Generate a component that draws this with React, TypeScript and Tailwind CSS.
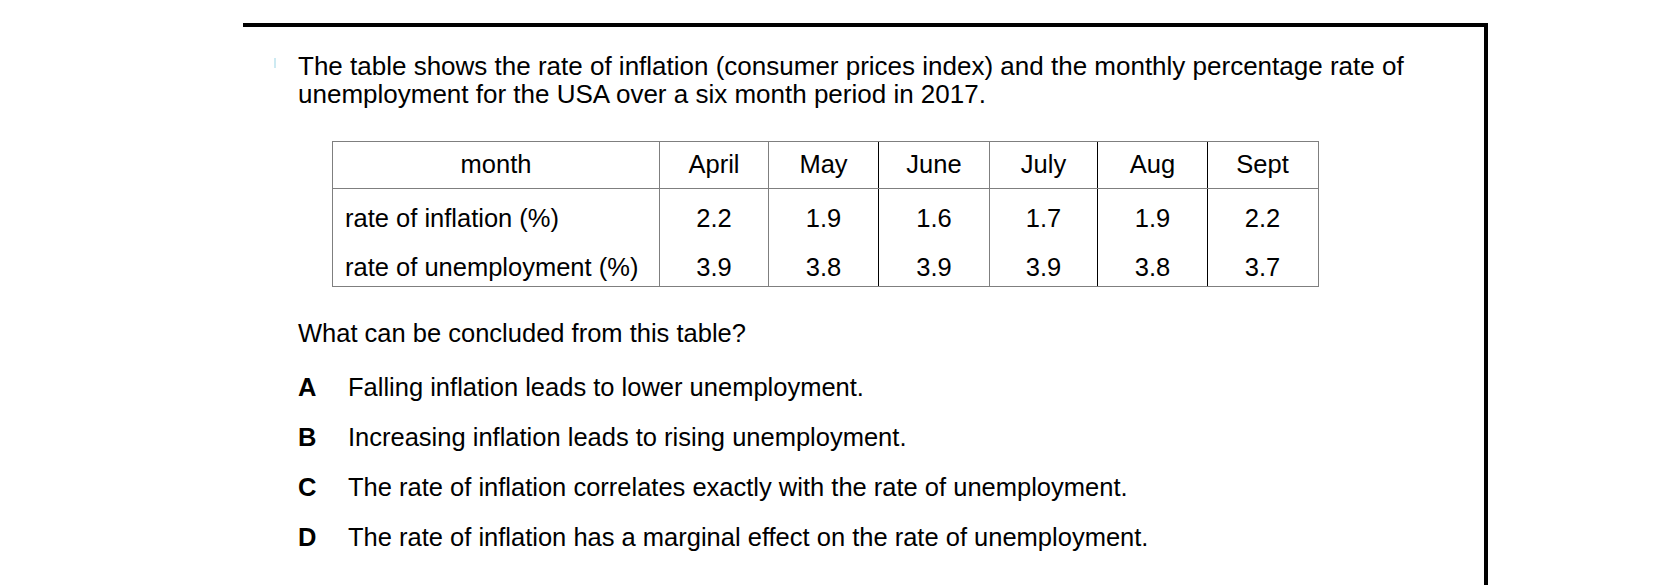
import React from "react";

const font = { fontFamily: '"Liberation Sans", Arial, sans-serif' };

const months = ["April", "May", "June", "July", "Aug", "Sept"];
const inflation = ["2.2", "1.9", "1.6", "1.7", "1.9", "2.2"];
const unemployment = ["3.9", "3.8", "3.9", "3.9", "3.8", "3.7"];
const lineColors = [
  "border-[#7f7f7f]",
  "border-[#7f7f7f]",
  "border-black",
  "border-[#7f7f7f]",
  "border-black",
  "border-black",
];

const options = [
  ["A", "Falling inflation leads to lower unemployment."],
  ["B", "Increasing inflation leads to rising unemployment."],
  ["C", "The rate of inflation correlates exactly with the rate of unemployment."],
  ["D", "The rate of inflation has a marginal effect on the rate of unemployment."],
];

export default function App() {
  return (
    <div
      className="h-[585px] w-[1656px] overflow-hidden bg-white pl-[243px] pt-[23px] text-black"
      style={font}
    >
      <div className="h-[600px] w-[1245px] border-t-4 border-r-4 border-black text-[25.5px] leading-[28px]">
        <div className="flex pt-[25px]">
          <div className="ml-[31px] mt-[6px] h-[10px] w-[2px] bg-[#cdeaf2]" />
          <p className="ml-[22px] w-[1170px] text-[26px] leading-[28px]">
            The table shows the rate of inflation (consumer prices index) and the monthly percentage rate of
            unemployment for the USA over a six month period in 2017.
          </p>
        </div>

        <div className="ml-[89px] mt-[33px] w-[987px] border border-[#7f7f7f]">
          <div className="grid h-[47px] grid-cols-[326px_109px_110px_111px_108px_110px_110px] border-b border-[#7f7f7f]">
            <div className="pt-[8px] text-center">month</div>
            {months.map((m, i) => (
              <div key={m} className={`border-l pt-[8px] text-center ${lineColors[i]}`}>
                {m}
              </div>
            ))}
          </div>
          <div className="grid h-[48px] grid-cols-[326px_109px_110px_111px_108px_110px_110px]">
            <div className="pl-[12px] pt-[15px]">rate of inflation (%)</div>
            {inflation.map((v, i) => (
              <div key={i} className={`border-l pt-[15px] text-center ${lineColors[i]}`}>
                {v}
              </div>
            ))}
          </div>
          <div className="grid h-[49px] grid-cols-[326px_109px_110px_111px_108px_110px_110px]">
            <div className="pl-[12px] pt-[16px]">rate of unemployment (%)</div>
            {unemployment.map((v, i) => (
              <div key={i} className={`border-l pt-[16px] text-center ${lineColors[i]}`}>
                {v}
              </div>
            ))}
          </div>
        </div>

        <p className="ml-[55px] mt-[32px]">What can be concluded from this table?</p>

        <div className="ml-[55px] mt-[26px] flex flex-col gap-[22px]">
          {options.map(([l, t]) => (
            <div key={l} className="flex">
              <span className="w-[50px] font-bold">{l}</span>
              <span>{t}</span>
            </div>
          ))}
        </div>
      </div>
    </div>
  );
}
